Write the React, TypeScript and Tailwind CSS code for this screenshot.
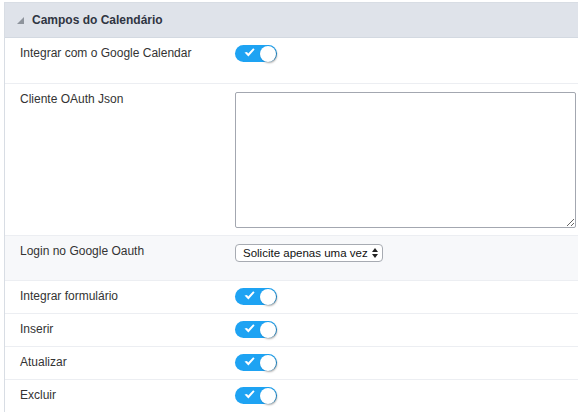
import React from "react";

function Toggle() {
  return (
    <div className="relative h-[17px] w-[42px] rounded-full bg-[#1ea3f3]">
      <svg className="absolute left-[9px] top-[3px]" width="11" height="9" viewBox="0 0 11 9">
        <path d="M0.5 4.5 L3 4 L4.2 5.6 L9.2 0.3 L10.6 1.4 L4.4 8.6 Z" fill="white" />
      </svg>
      <div className="absolute right-[1px] top-[0.5px] h-[16px] w-[16px] rounded-full bg-white shadow-[1px_1px_2px_rgba(0,0,0,0.35)]" />
    </div>
  );
}

const label = "w-[230px] shrink-0 pl-[15px] pt-[8px] text-[12px] leading-[15px] text-[#333333]";

export default function App() {
  return (
    <div className="h-[412px] w-[578px] overflow-hidden bg-white pt-[2px] pl-[4px]" style={{ fontFamily: '"Liberation Sans", Arial, sans-serif' }}>
      <div className="border-l border-t border-[#d8dde4]">
        <div className="flex h-[35px] items-center border-b border-[#d3d9e1] bg-[#dfe3ea] pl-[12px]">
          <svg width="7" height="7" viewBox="0 0 7 7" className="mr-[8px] mt-[1px]">
            <path d="M7 0 L7 7 L0 7 Z" fill="#8e949c" />
          </svg>
          <span className="text-[12px] font-bold text-[#2f3542]">Campos do Calendário</span>
        </div>

        <div className="flex h-[46px] border-b border-[#eceef2]">
          <div className={label}>Integrar com o Google Calendar</div>
          <div className="pt-[7px]"><Toggle /></div>
        </div>

        <div className="flex h-[152px] border-b border-[#eceef2]">
          <div className={label}>Cliente OAuth Json</div>
          <div className="pt-[8px]">
            <textarea className="block h-[136px] w-[341px] resize rounded-[2px] border border-[#a3a7b0] bg-white" />
          </div>
        </div>

        <div className="flex h-[45px] border-b border-[#eceef2] bg-[#f7f8fa]">
          <div className={label}>Login no Google Oauth</div>
          <div className="pt-[8px]">
            <div className="flex h-[18px] w-[148px] items-center whitespace-nowrap rounded-[4px] border border-[#a7abb2] bg-white pl-[7px] text-[11.5px] leading-[16px] text-[#111]">
              <span>Solicite apenas uma vez</span>
              <svg width="6" height="10" viewBox="0 0 6 10" className="ml-[4px]">
                <path d="M3 0 L6 4 L0 4 Z" fill="#222" />
                <path d="M0 6 L6 6 L3 10 Z" fill="#222" />
              </svg>
            </div>
          </div>
        </div>

        {["Integrar formulário", "Inserir", "Atualizar", "Excluir"].map((l, i) => (
          <div key={l} className={`flex h-[33px] ${i < 3 ? "border-b border-[#eceef2]" : ""}`}>
            <div className={label}>{l}</div>
            <div className="pt-[7px]"><Toggle /></div>
          </div>
        ))}
      </div>
    </div>
  );
}
